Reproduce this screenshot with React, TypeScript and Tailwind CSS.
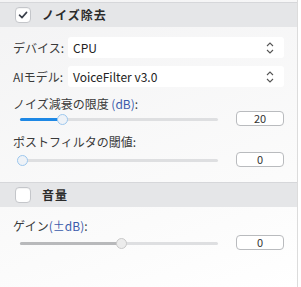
import { useState } from "react";

const font = { fontFamily: '"Noto Sans CJK JP", "Noto Sans", sans-serif' };

function Check({ checked, onClick }: { checked: boolean; onClick: () => void }) {
  return (
    <button
      onClick={onClick}
      className="w-[16px] h-[16px] rounded-[4px] border border-[#c4c6ca] bg-white flex items-center justify-center shadow-[inset_0_1px_1px_rgba(0,0,0,0.05)]"
    >
      {checked && (
        <svg width="10" height="10" viewBox="0 0 10 10">
          <path d="M1.5 5.2 L4 7.6 L8.6 2.4" fill="none" stroke="#3a3f4a" strokeWidth="1.6" strokeLinecap="round" strokeLinejoin="round" />
        </svg>
      )}
    </button>
  );
}

function Header({ title, checked, onToggle }: { title: string; checked: boolean; onToggle: () => void }) {
  return (
    <div className="h-[25px] bg-[#e5e6e8] border-t border-[#d6d7da] flex items-center pl-[15px] gap-[11px]">
      <Check checked={checked} onClick={onToggle} />
      <span className="text-[12px] font-bold text-[#2b2b2b] tracking-[1px]">{title}</span>
    </div>
  );
}

function SelectRow({ label, value }: { label: string; value: string }) {
  return (
    <div className="flex items-center h-[21px]">
      <span className="w-[55px] text-[12px] text-[#3a3a3a]">{label}</span>
      <div className="flex-1 h-[21px] bg-white rounded-[3px] flex items-center justify-between pl-[5px] pr-[10px] text-[12px] text-[#222]">
        <span>{value}</span>
        <svg width="8" height="12" viewBox="0 0 8 12">
          <path d="M1 4 L4 1 L7 4 M1 8 L4 11 L7 8" fill="none" stroke="#555" strokeWidth="1.1" />
        </svg>
      </div>
    </div>
  );
}

function Slider({ pct, active, disabled }: { pct: number; active?: boolean; disabled?: boolean }) {
  return (
    <div className="relative flex-1 h-[12px] ml-[3px] mr-[1px]">
      <div className="absolute left-0 right-0 top-[5px] h-[3px] rounded bg-[#dedfe1]" />
      <div
        className={`absolute left-0 top-[5px] h-[3px] rounded ${active ? "bg-[#1e88e5]" : disabled ? "bg-[#b8b9bb]" : "bg-transparent"}`}
        style={{ width: `${pct}%` }}
      />
      <div
        className={`absolute top-[1px] w-[11px] h-[11px] -ml-[5px] rounded-full border ${disabled ? "bg-[#ececec] border-[#c9c9c9]" : "bg-[#eef2f7] border-[#9cc7ee]"}`}
        style={{ left: `${pct}%` }}
      />
    </div>
  );
}

function SliderRow({ pct, value, active, disabled }: { pct: number; value: string; active?: boolean; disabled?: boolean }) {
  return (
    <div className="flex items-center pl-[17px] pr-[13px] gap-[17px]">
      <Slider pct={pct} active={active} disabled={disabled} />
      <div className="w-[48px] h-[15px] rounded-[4px] border border-[#b9bbbe] bg-white flex items-center justify-center text-[11px] text-[#333]">
        {value}
      </div>
    </div>
  );
}

export default function App() {
  const [noise, setNoise] = useState(true);
  const [vol, setVol] = useState(false);
  return (
    <div style={font} className="w-[301px] h-[287px] bg-white">
      <div className="w-[298px] h-[287px] border-r border-[#dcdcdc] pt-[2px] bg-[linear-gradient(160deg,#f3f3f4,#fbfbfb_70%,#ffffff)]">
        <Header title="ノイズ除去" checked={noise} onToggle={() => setNoise(!noise)} />
        <div className="px-[13px] pt-[10px] flex flex-col gap-[8px]">
          <SelectRow label="デバイス:" value="CPU" />
          <SelectRow label="AIモデル:" value="VoiceFilter v3.0" />
        </div>
        <div className="mt-[9px] px-[13px] text-[12px] text-[#3a3a3a] leading-[16px]">
          ノイズ減衰の限度 <span className="text-[#3b5bab]">(dB)</span>:
        </div>
        <div className="-mt-[1px]">
          <SliderRow pct={21} value="20" active />
        </div>
        <div className="mt-[8px] px-[13px] text-[12px] text-[#3a3a3a] leading-[16px]">ポストフィルタの閾値:</div>
        <div className="mt-[2px] mb-[15px]">
          <SliderRow pct={1} value="0" />
        </div>
        <Header title="音量" checked={vol} onToggle={() => setVol(!vol)} />
        <div className="mt-[11px] px-[13px] text-[12px] text-[#3a3a3a] leading-[16px]">
          ゲイン<span className="text-[#3b5bab]">(±dB)</span>:
        </div>
        <div className="mt-[1px]">
          <SliderRow pct={51} value="0" disabled />
        </div>
      </div>
    </div>
  );
}
